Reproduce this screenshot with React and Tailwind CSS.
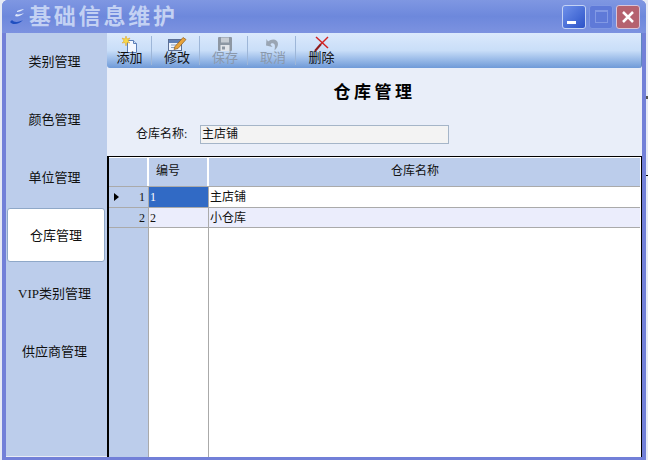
import React from "react";

const sideItems = ["类别管理", "颜色管理", "单位管理", "仓库管理", "VIP类别管理", "供应商管理"];

// small toolbar icons, hand drawn
const AddIcon = () => (
  <svg width="18" height="17" viewBox="0 0 18 17">
    <path d="M6.500 4.500h6l3 3v9h-9z" fill="#f4f8ff" stroke="#5c7fb8" strokeWidth="1" />
    <path d="M12.500 4.500v3h3" fill="#cfe0f5" stroke="#5c7fb8" strokeWidth="1" />
    <path d="M5 0l1 3 3-1-2 3 2 2-3-.5L5 10 4 6.500 1 7l2-2-2-3 3 1z" fill="#f6d94a" stroke="#e0a020" strokeWidth="0.5" />
  </svg>
);
const EditIcon = () => (
  <svg width="20" height="16" viewBox="0 0 20 16">
    <rect x="1.500" y="3.500" width="13" height="11" fill="#eef4fd" stroke="#5b6f95" />
    <rect x="2" y="4" width="12" height="3" fill="#5f7fb5" />
    <path d="M4 9h7M4 11.500h5" stroke="#8aa0c0" />
    <path d="M8 10.500l8-9 3 2-8 9-4 1z" fill="#e8a33a" stroke="#8a5a20" strokeWidth="0.7" />
  </svg>
);
const SaveIcon = () => (
  <svg width="16" height="16" viewBox="0 0 16 16">
    <rect x="1" y="1" width="14" height="14" rx="1" fill="#8d97a3" />
    <rect x="4" y="1.500" width="8" height="5" fill="#c6ccd3" />
    <rect x="3.500" y="9" width="9" height="6" fill="#e2e5ea" />
    <rect x="5" y="10.500" width="3" height="3" fill="#8d97a3" />
  </svg>
);
const UndoIcon = () => (
  <svg width="16" height="15" viewBox="0 0 16 15">
    <path d="M3 5.500C7 2 13 3 13 8c0 2.500-1.500 4.500-3.500 6.500 .5-3 1-6-1-7-1.500-.7-2.500 0-3 1L7.500 11 1 9.500 1.500 3z" fill="#9aa5b3" />
  </svg>
);
const DeleteIcon = () => (
  <svg width="18" height="17" viewBox="0 0 18 17">
    <path d="M3 1l12 11" stroke="#d32222" strokeWidth="1.500" fill="none" />
    <path d="M15 1L8 8" stroke="#d32222" strokeWidth="1.500" fill="none" />
    <path d="M8 8L2 15" stroke="#8f1a1a" strokeWidth="2" fill="none" />
  </svg>
);

const tools = [
  { label: "添加", icon: <AddIcon />, w: "w-[44px]" },
  { label: "修改", icon: <EditIcon />, w: "w-[48px] pl-[3px]" },
  { label: "保存", icon: <SaveIcon />, w: "w-[48px] pl-[3px]", off: true },
  { label: "取消", icon: <UndoIcon />, w: "w-[48px] pl-[3px]", off: true },
  { label: "删除", icon: <DeleteIcon />, w: "w-[48px] pl-[3px]" },
];

const rows = [
  { id: "1", no: "1", name: "主店铺", bg: "bg-white", mark: true, h: "h-[21px]" },
  { id: "2", no: "2", name: "小仓库", bg: "bg-[#ebedfc]", h: "h-[20px]" },
];

export default function App() {
  return (
    <div className="relative w-[648px] h-[460px] overflow-hidden bg-[#e6eaf5] flex text-[12px] text-[#111] font-['Liberation_Serif','Noto_Sans_CJK_SC',serif]">
      {/* bits of the window behind */}
      <div className="absolute right-0 top-[175px] w-[2px] h-[1px] bg-black" />
      <div className="absolute right-0 top-[96px] w-[2px] h-[3px] bg-[#555]" />

      <div className="w-[644px] ml-[2px] h-[460px] flex flex-col bg-[#7280d8] rounded-t-[6px] px-[4px] pb-[3px]">
        {/* title bar */}
        <div className="h-[33px] shrink-0 -mx-[4px] px-[6px] rounded-t-[6px] flex items-center bg-gradient-to-b from-[#7f97e2] via-[#6d88dc] to-[#7c92e0]">
          <svg width="20" height="20" viewBox="0 0 20 20" className="shrink-0">
            <path d="M2 15c2 3 9 3 13-2-3 2-9 3-11 0z" fill="#1f4fc0" />
            <path d="M7 9c2 1 6 0 9-3-2 1-6 2-8 1z" fill="#dfe8fa" />
            <path d="M9 5c2 0 5-1 7-3-2 0-5 1-7 2z" fill="#dfe8fa" />
          </svg>
          <span className="ml-[1px] text-[22px] leading-none font-bold tracking-[2.800px] text-[#c3d1f3]">基础信息维护</span>
          <div className="ml-auto flex gap-[3px] items-center">
            <div className="w-[24px] h-[24px] rounded-[3px] border border-[#c4d3f5] bg-gradient-to-br from-[#6f90ea] to-[#2c52c8] flex items-end justify-center pb-[4px] pr-[6px]">
              <div className="w-[9px] h-[3px] bg-white" />
            </div>
            <div className="w-[24px] h-[24px] rounded-[3px] border border-[#7f97e2] bg-[#5f7ad8] flex items-center justify-center">
              <div className="w-[13px] h-[13px] border border-[#8299e4] border-t-2" />
            </div>
            <div className="w-[24px] h-[24px] rounded-[3px] border border-[#d8c4d8] bg-[#b5626f] flex items-center justify-center">
              <svg width="14" height="14" viewBox="0 0 14 14">
                <path d="M2 2l10 10M12 2L2 12" stroke="#fff" strokeWidth="2.500" />
              </svg>
            </div>
          </div>
        </div>

        <div className="flex-1 min-h-0 flex">
          {/* side list */}
          <div className="w-[101px] shrink-0 bg-[#bccdeb] border-b border-[#e8ecf4] text-[13px]">
            <div className="-mt-[1px] flex flex-col">
              {sideItems.map((item) => {
                const on = item === "仓库管理";
                return (
                  <div
                    key={item}
                    className={
                      on
                        ? "h-[54px] ml-[1px] mr-[2px] my-[2px] pt-[1px] bg-white border border-[#8fa8c8] rounded-[3px] flex items-center justify-center"
                        : "h-[58px] pt-[1px] flex items-center justify-center pr-[4px]"
                    }
                  >
                    {item}
                  </div>
                );
              })}
            </div>
          </div>

          {/* right side */}
          <div className="flex-1 min-w-0 flex flex-col bg-[#e9eef9]">
            <div className="h-[35px] shrink-0 flex items-start pt-[3px] pl-[1px] rounded-b-[3px] border-r border-[#5f86c0] bg-gradient-to-b from-[#dbe9fc] via-[#c9def8] to-[#6f9ad8] text-[13px]">
              {tools.map((t, i) => (
                <div
                  key={t.label}
                  className={`${t.w} h-[29px] flex flex-col items-center ${i < 4 ? "border-r border-[#9db6d8]" : ""} ${t.off ? "text-[#8a98ab]" : ""}`}
                >
                  <div className="h-[15px] flex items-start justify-center">{t.icon}</div>
                  <span className="leading-[14px]">{t.label}</span>
                </div>
              ))}
            </div>

            <div className="h-[53px] shrink-0 flex items-center justify-center pb-[3px]">
              <span className="text-[17px] font-bold tracking-[3.500px] text-black">仓库管理</span>
            </div>

            <div className="h-[35px] shrink-0 flex items-start pl-[29px] pt-[4px]">
              <span className="w-[64px] h-[19px] leading-[19px]">仓库名称:</span>
              <div className="w-[249px] h-[19px] leading-[16px] border border-[#a5b5c8] bg-[#f3f3f3] pl-[1px]">主店铺</div>
            </div>

            {/* grid */}
            <div className="flex-1 min-h-0 border border-black border-l-2 border-b-0 flex flex-col bg-white pt-[1px] pr-[1px]">
              <div className="h-[29px] shrink-0 flex bg-[#bccdeb] border-b border-b-[#aaa]">
                <div className="w-[40px] border-r-2 border-white" />
                <div className="w-[60px] border-r-2 border-white flex items-center justify-center pb-[2px] pr-[20px]">编号</div>
                <div className="flex-1 flex items-center justify-center pb-[2px] pr-[19px]">仓库名称</div>
              </div>
              {rows.map((r) => (
                <div key={r.id} className={`${r.h} shrink-0 flex border-b border-[#aaa] ${r.bg}`}>
                  <div className="w-[40px] bg-[#bccdeb] border-r border-[#aaa] flex items-center pr-[3px]">
                    {r.mark && <div className="ml-[5px] border-y-[4px] border-y-transparent border-l-[5px] border-l-black" />}
                    <span className="ml-auto">{r.no}</span>
                  </div>
                  <div className={`w-[60px] border-r border-[#aaa] flex items-center pl-[1px] ${r.mark ? "bg-[#316ac5] text-white" : ""}`}>{r.id}</div>
                  <div className="flex-1 flex items-center pl-[1px]">{r.name}</div>
                </div>
              ))}
              <div className="flex-1 flex">
                <div className="w-[40px] bg-[#bccdeb] border-r border-[#aaa]" />
                <div className="w-[60px] border-r border-[#aaa]" />
              </div>
            </div>
          </div>
        </div>
      </div>
    </div>
  );
}
